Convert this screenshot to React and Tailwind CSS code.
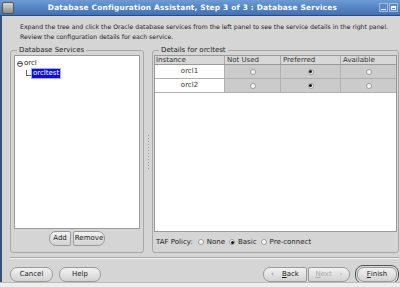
export default function App() {
  const Radio = ({ on }) => (
    <span className="inline-flex items-center justify-center w-[6px] h-[6px] rounded-full border border-[#9a9a9a] bg-[#f8f8f8]">
      {on && <span className="w-[3px] h-[3px] rounded-full bg-[#111]" />}
    </span>
  );
  const Btn = ({ children, className = "", disabled }) => (
    <div
      className={
        "h-[15px] flex items-center justify-center rounded-[7px] border border-[#9a9a9a] bg-gradient-to-b from-[#f2f2f2] to-[#d2d2d2] text-[7px] " +
        (disabled ? "text-[#a8a8a8] " : "text-[#222] ") +
        className
      }
    >
      {children}
    </div>
  );
  const rows = ["orcl1", "orcl2"];
  return (
    <div
      className="w-[400px] h-[287px] flex flex-col bg-[#d5d5d5] overflow-hidden"
      style={{ fontFamily: '"DejaVu Sans", sans-serif' }}
    >
      {/* title bar */}
      <div className="h-[16px] shrink-0 flex items-center bg-gradient-to-b from-[#6d9bd6] to-[#4270b2] border-b border-[#2a4a80]">
        <div className="w-[12px] h-[12px] ml-[2px] rounded-[2px] bg-gradient-to-b from-[#d8d8d8] to-[#8a8a8a] border border-[#555]" />
        <div className="flex-1 text-center text-white font-bold text-[7.4px] tracking-[0.2px] pr-[8px]">
          Database Configuration Assistant, Step 3 of 3 : Database Services
        </div>
        <div className="flex gap-[1px] mr-[2px]">
          <div className="w-[9px] h-[9px] bg-[#5b88c4] border border-[#9fbde6] flex items-end justify-center pb-[1px]">
            <div className="w-[5px] h-[1px] bg-white" />
          </div>
          <div className="w-[9px] h-[9px] bg-[#5b88c4] border border-[#9fbde6] flex items-center justify-center">
            <div className="w-[5px] h-[4px] border border-white border-t-2" />
          </div>
        </div>
      </div>
      {/* body */}
      <div className="flex-1 min-h-0 flex flex-col border-l-2 border-[#34507e] pl-[8px] pr-[1px]">
        <div className="pl-[10px] pt-[6px] text-[6.2px] leading-[10px] text-[#222] whitespace-nowrap">
          <div>Expand the tree and click the Oracle database services from the left panel to see the service details in the right panel.</div>
          <div>Review the configuration details for each service.</div>
        </div>
        <div className="flex mt-[8px] h-[203px] shrink-0">
          {/* left group */}
          <div className="w-[134px] relative border border-[#a8a8a8] rounded-[3px] flex flex-col px-[3px] pt-[4px] pb-[6px]">
            <div className="absolute -top-[5px] left-[6px] px-[2px] bg-[#d5d5d5] text-[7px] leading-[9px] text-[#222]">Database Services</div>
            <div className="h-[177px] bg-white border border-[#9a9a9a] pt-[3px] pl-[2px] text-[7px] leading-[9px] text-[#222]">
              <div className="flex items-center gap-[1px]">
                <span className="w-[6px] h-[6px] rounded-full border border-[#555] flex items-center justify-center">
                  <span className="w-[4px] h-[1px] bg-[#555]" />
                </span>
                <span>orcl</span>
              </div>
              <div className="flex items-end">
                <span className="ml-[9px] w-[5px] h-[6px] border-l border-b border-[#666] mb-[3px]" />
                <span className="bg-[#1010c8] text-white px-[1px] leading-[9px] border border-[#9ab0ff]">orcltest</span>
              </div>
            </div>
            <div className="flex justify-center gap-[2px] mt-[2px]">
              <Btn className="w-[22px] rounded-l-[7px] rounded-r-[2px]">Add</Btn>
              <Btn className="w-[32px] rounded-l-[2px] rounded-r-[7px]">Remove</Btn>
            </div>
          </div>
          {/* splitter */}
          <div className="w-[8px] flex flex-col items-center justify-center gap-[2px]">
            {Array.from({ length: 12 }).map((_, i) => (
              <div key={i} className="w-[1px] h-[1px] bg-[#9a9a9a]" />
            ))}
          </div>
          {/* right group */}
          <div className="flex-1 relative border border-[#a8a8a8] rounded-[3px] flex flex-col px-[1px] pt-[4px] pb-[4px]">
            <div className="absolute -top-[5px] left-[6px] px-[2px] bg-[#d5d5d5] text-[7px] leading-[9px] text-[#222]">Details for orcltest</div>
            <div className="h-[177px] bg-white border border-[#9a9a9a] text-[7px] text-[#333]">
              <div className="grid grid-cols-[70px_56px_60px_1fr] bg-[#d8d8d8] border-b border-[#9a9a9a] h-[9px] leading-[8px]">
                <div className="pl-[1px] border-r border-[#aaa]">Instance</div>
                <div className="pl-[2px] border-r border-[#aaa]">Not Used</div>
                <div className="pl-[2px] border-r border-[#aaa]">Preferred</div>
                <div className="pl-[2px]">Available</div>
              </div>
              {rows.map((r) => (
                <div key={r} className="grid grid-cols-[70px_56px_60px_1fr] h-[14px] border-b border-[#b0b0b0]">
                  <div className="bg-white flex items-center justify-center border-r border-[#b0b0b0]">{r}</div>
                  <div className="bg-[#cbcbcb] flex items-center justify-center border-r border-[#b0b0b0]"><Radio /></div>
                  <div className="bg-[#cbcbcb] flex items-center justify-center border-r border-[#b0b0b0]"><Radio on /></div>
                  <div className="bg-[#cbcbcb] flex items-center justify-center"><Radio /></div>
                </div>
              ))}
            </div>
            <div className="flex items-center gap-[4px] mt-[5px] ml-[2px] text-[7px] text-[#222]">
              <span className="mr-[1px]">TAF Policy:</span>
              <span className="flex items-center gap-[3px]"><Radio />None</span>
              <span className="flex items-center gap-[3px]"><Radio on />Basic</span>
              <span className="flex items-center gap-[3px]"><Radio />Pre-connect</span>
            </div>
          </div>
        </div>
        {/* separator */}
        <div className="mt-[4px] h-[2px] shrink-0 border-t border-[#a8a8a8] border-b border-b-[#f0f0f0]" />
        <div className="flex items-center mt-[6px] shrink-0">
          <Btn className="w-[43px]">Cancel</Btn>
          <Btn className="w-[42px] ml-[6px]">Help</Btn>
          <div className="flex-1" />
          <Btn className="w-[44px] rounded-r-[2px]">
            <span className="mr-[8px] text-[#777]">&lsaquo;</span>
            <span className="underline">B</span>ack
          </Btn>
          <Btn className="w-[42px] rounded-l-[2px] ml-[1px]" disabled>
            <span className="underline">N</span>ext<span className="ml-[8px]">&rsaquo;</span>
          </Btn>
          <div className="ml-[5px] rounded-[8px] border border-[#555] p-[1px]">
            <Btn className="w-[40px] h-[13px]">
              <span className="underline">F</span>inish
            </Btn>
          </div>
        </div>
        <div className="flex-1" />
      </div>
      <div className="h-[5px] shrink-0 bg-[#eeeeee] border-t border-[#bbb]" />
    </div>
  );
}
